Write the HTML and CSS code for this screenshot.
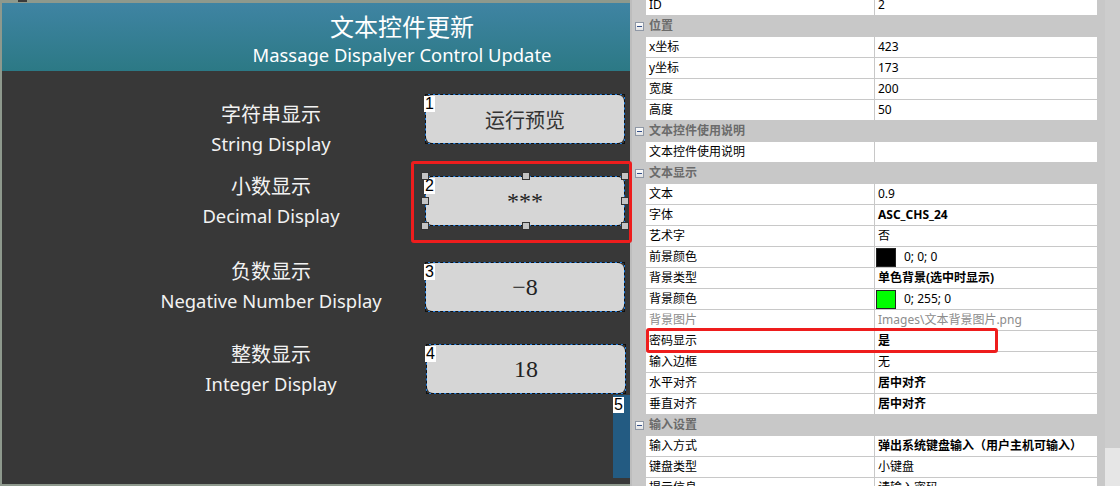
FILE: index.html
```html
<!DOCTYPE html>
<html lang="zh-CN">
<head>
    <meta charset="UTF-8">
    <title>文本控件更新</title>
    <link rel="stylesheet" href="styles.css">
</head>
<body>
    <div class="workspace">
        <!-- Design canvas of the HMI screen -->
        <div class="stage">
            <span class="stage-tab"></span>
            <div class="canvas">
                <header class="title-bar">
                    <div class="title-cn">文本控件更新</div>
                    <div class="title-en">Massage Dispalyer Control Update</div>
                </header>

                <div class="caption cap-1"><div class="cn">字符串显示</div><div class="en">String Display</div></div>
                <div class="caption cap-2"><div class="cn">小数显示</div><div class="en">Decimal Display</div></div>
                <div class="caption cap-3"><div class="cn">负数显示</div><div class="en">Negative Number Display</div></div>
                <div class="caption cap-4"><div class="cn">整数显示</div><div class="en">Integer Display</div></div>

                <div class="field field-1"><span class="text text-cn">运行预览</span><span class="no">1</span></div>
                <div class="field field-2">
                    <span class="text">***</span><span class="no">2</span>
                    <span class="handle h-tl"></span><span class="handle h-tc"></span><span class="handle h-tr"></span>
                    <span class="handle h-ml"></span><span class="handle h-mr"></span>
                    <span class="handle h-bl"></span><span class="handle h-bc"></span><span class="handle h-br"></span>
                </div>
                <div class="field field-3"><span class="text">&minus;8</span><span class="no">3</span></div>
                <div class="field field-4"><span class="text">18</span><span class="no">4</span></div>

                <div class="panel-5"><span class="no">5</span></div>
            </div>
        </div>

        <!-- Property grid of the selected control -->
        <div class="props">
            <div class="grid">
                <div class="row"><span class="gut"></span><span class="name">ID</span><span class="val">2</span></div>
                <div class="row group"><span class="gut"><i class="toggle"></i></span><span class="name">位置</span><span class="val"></span></div>
                <div class="row"><span class="gut"></span><span class="name">x坐标</span><span class="val">423</span></div>
                <div class="row"><span class="gut"></span><span class="name">y坐标</span><span class="val">173</span></div>
                <div class="row"><span class="gut"></span><span class="name">宽度</span><span class="val">200</span></div>
                <div class="row"><span class="gut"></span><span class="name">高度</span><span class="val">50</span></div>
                <div class="row group"><span class="gut"><i class="toggle"></i></span><span class="name">文本控件使用说明</span><span class="val"></span></div>
                <div class="row"><span class="gut"></span><span class="name">文本控件使用说明</span><span class="val"></span></div>
                <div class="row group"><span class="gut"><i class="toggle"></i></span><span class="name">文本显示</span><span class="val"></span></div>
                <div class="row"><span class="gut"></span><span class="name">文本</span><span class="val">0.9</span></div>
                <div class="row"><span class="gut"></span><span class="name">字体</span><span class="val bold">ASC_CHS_24</span></div>
                <div class="row"><span class="gut"></span><span class="name">艺术字</span><span class="val">否</span></div>
                <div class="row"><span class="gut"></span><span class="name">前景颜色</span><span class="val"><i class="swatch black"></i>0; 0; 0</span></div>
                <div class="row"><span class="gut"></span><span class="name">背景类型</span><span class="val bold">单色背景(选中时显示)</span></div>
                <div class="row"><span class="gut"></span><span class="name">背景颜色</span><span class="val"><i class="swatch green"></i>0; 255; 0</span></div>
                <div class="row muted"><span class="gut"></span><span class="name">背景图片</span><span class="val">Images\文本背景图片.png</span></div>
                <div class="row"><span class="gut"></span><span class="name">密码显示</span><span class="val bold">是</span></div>
                <div class="row"><span class="gut"></span><span class="name">输入边框</span><span class="val">无</span></div>
                <div class="row"><span class="gut"></span><span class="name">水平对齐</span><span class="val bold">居中对齐</span></div>
                <div class="row"><span class="gut"></span><span class="name">垂直对齐</span><span class="val bold">居中对齐</span></div>
                <div class="row group"><span class="gut"><i class="toggle"></i></span><span class="name">输入设置</span><span class="val"></span></div>
                <div class="row"><span class="gut"></span><span class="name">输入方式</span><span class="val bold">弹出系统键盘输入（用户主机可输入）</span></div>
                <div class="row"><span class="gut"></span><span class="name">键盘类型</span><span class="val">小键盘</span></div>
                <div class="row"><span class="gut"></span><span class="name">提示信息</span><span class="val">请输入密码</span></div>
            </div>
            <div class="scrollbar"><div class="thumb"></div></div>
        </div>
    </div>

    <!-- Red highlight frames -->
    <div class="mark mark-field"></div>
    <div class="mark mark-row"></div>
</body>
</html>
```

FILE: styles.css
```css
/* Page base */
body {
    margin: 0;
    width: 1120px;
    height: 486px;
    overflow: hidden;
    position: relative;
    font-family: "Noto Sans", "Noto Sans CJK SC", sans-serif;
}

.workspace {
    display: flex;
    height: 486px;
}

/* Left: editor stage with the screen canvas */
.stage {
    width: 628px;
    flex: none;
    overflow: hidden;
    background-color: #8e998d;
    padding: 3px 0 0 2px;
    position: relative;
}

.stage-tab {
    position: absolute;
    left: 18px;
    top: 0;
    width: 9px;
    height: 2px;
    background-color: #3a3a3a;
}

.canvas {
    width: 800px;
    height: 481px;
    background-color: #383838;
    position: relative;
}

.title-bar {
    height: 68px;
    box-sizing: border-box;
    padding-top: 9px;
    background: linear-gradient(#3f84a3, #2c7985);
    color: #fff;
    text-align: center;
}

.title-cn {
    font-size: 24px;
    line-height: 30px;
}

.title-en {
    font-size: 18.4px;
    line-height: 26px;
}

/* Two-line captions left of the fields */
.caption {
    position: absolute;
    left: 119px;
    width: 300px;
    text-align: center;
    color: #f2f2f2;
    line-height: 29px;
}

.caption .cn {
    font-size: 20px;
}

.caption .en {
    font-size: 18.4px;
}

.cap-1 { top: 97px; }
.cap-2 { top: 169px; }
.cap-3 { top: 254px; }
.cap-4 { top: 337px; }

/* Text fields placed on the canvas */
.field {
    position: absolute;
    left: 423px;
    width: 200px;
    height: 50px;
    box-sizing: border-box;
    border: 1px solid #1e80e6;
    display: flex;
    align-items: center;
    justify-content: center;
}

.field::before {
    content: "";
    position: absolute;
    inset: 0;
    background-color: #d6d6d6;
    border-radius: 6px;
}

.field::after {
    content: "";
    position: absolute;
    inset: -1px;
    border: 1px dashed #111;
}

.field-1 { top: 91px; }
.field-2 { top: 173px; }
.field-3 { top: 259px; }
.field-4 { top: 341px; left: 424px; }

.field .text {
    position: relative;
    font-family: "Liberation Serif", "Noto Sans CJK SC", serif;
    font-size: 24px;
    color: #222;
}

.field .text-cn {
    font-size: 20px;
    color: #333;
}

.no {
    position: absolute;
    left: -2px;
    top: 1px;
    z-index: 1;
    background-color: #fff;
    color: #000;
    font-family: "Liberation Sans", sans-serif;
    font-size: 16px;
    line-height: 16px;
    padding: 0 1px;
}

/* Resize handles of the selected field */
.handle {
    position: absolute;
    z-index: 2;
    width: 6px;
    height: 6px;
    background-color: #c4c4c4;
    border: 1px solid #333;
}

.h-tl, .h-tc, .h-tr { top: -5px; }
.h-ml, .h-mr { top: 20px; }
.h-bl, .h-bc, .h-br { bottom: -5px; }
.h-tl, .h-ml, .h-bl { left: -5px; }
.h-tc, .h-bc { left: 96px; }
.h-tr, .h-mr, .h-br { right: -5px; }

/* Partly hidden control number 5 */
.panel-5 {
    position: absolute;
    left: 611px;
    top: 392px;
    width: 200px;
    height: 83px;
    background-color: #235b82;
}

.panel-5 .no {
    left: 0;
    top: 2px;
}

/* Right: property grid */
.props {
    flex: 1;
    display: flex;
    border-left: 2px solid #bdbdbd;
    background-color: #c8c8c8;
    font-size: 12px;
    color: #000;
}

.grid {
    flex: 1;
    margin-top: -5px;
    padding-right: 8px;
}

.row {
    display: grid;
    grid-template-columns: 14px 228px 1fr;
    height: 20px;
    border-bottom: 1px solid #c8c8c8;
    line-height: 20px;
    white-space: nowrap;
}

.row .name,
.row .val {
    background-color: #fff;
    padding-left: 3px;
    overflow: hidden;
}

.row .val {
    border-left: 1px solid #c8c8c8;
    display: flex;
    align-items: center;
}

.row .bold {
    font-weight: bold;
}

.row.muted {
    color: #8c8c8c;
}

.row.group .name,
.row.group .val {
    background-color: #c8c8c8;
    border-left: none;
}

.row.group .name {
    color: #6b6b6b;
    font-weight: bold;
}

.gut {
    display: flex;
    align-items: center;
    justify-content: center;
}

/* Collapse box in the group rows */
.toggle {
    width: 7px;
    height: 7px;
    border: 1px solid #8f98a6;
    background: linear-gradient(#fdfdfd, #e2e2e2);
    position: relative;
}

.toggle::after {
    content: "";
    position: absolute;
    left: 1px;
    right: 1px;
    top: 3px;
    height: 1px;
    background-color: #34508a;
}

.swatch {
    width: 18px;
    height: 17px;
    border: 1px solid #222;
    margin: 0 8px 0 -2px;
}

.swatch.black { background-color: #000; }
.swatch.green { background-color: #00ff00; }

.scrollbar {
    width: 15px;
    background-color: #e6e6e6;
}

.thumb {
    height: 448px;
    background-color: #cdcdcd;
}

/* Red highlight frames */
.mark {
    position: absolute;
    border: 3px solid #ee1d1d;
    border-radius: 3px;
}

.mark-field {
    left: 411px;
    top: 161px;
    width: 215px;
    height: 76px;
}

.mark-row {
    left: 646px;
    top: 328px;
    width: 346px;
    height: 19px;
}
```
